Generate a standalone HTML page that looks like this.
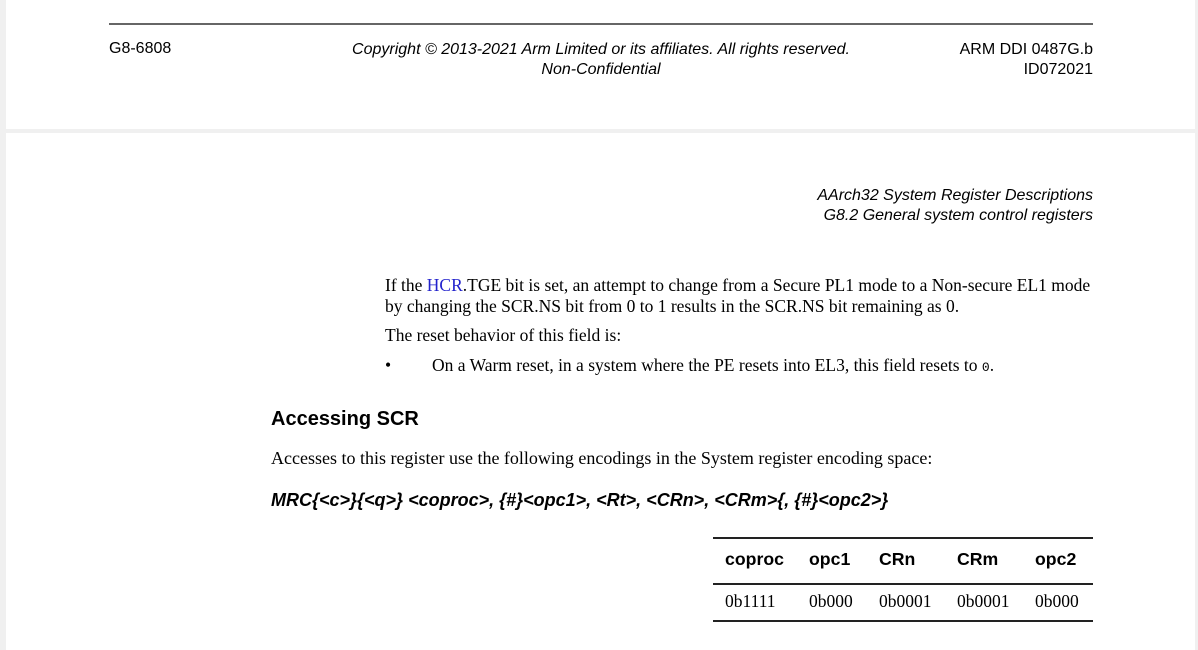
<!DOCTYPE html>
<html><head><style>
body{margin:0;width:1198px;height:650px;background:#f0f0f0;position:relative;overflow:hidden;font-family:"Liberation Sans",sans-serif;color:#000}
.pg{position:absolute;left:6px;width:1189px;background:#fff}
.a{position:absolute;white-space:nowrap}
.s{font-family:"Liberation Serif",serif;font-size:17.5px}
.h{font-size:16px}
.ln{position:absolute;height:1.5px;background:#222}
.b{font-size:17.7px;font-weight:bold}
</style></head><body>
<div class="pg" style="top:0;height:129px"></div>
<div class="pg" style="top:133px;height:517px"></div>
<div class="ln" style="left:109px;width:984px;top:23px;background:#666"></div>
<div class="a h" style="left:109px;top:40px">G8-6808</div>
<div class="a h" style="left:341px;top:40px;width:520px;text-align:center;font-style:italic;line-height:20px">Copyright © 2013-2021 Arm Limited or its affiliates. All rights reserved.<br>Non-Confidential</div>
<div class="a h" style="right:105px;top:40px;text-align:right;line-height:20px">ARM DDI 0487G.b<br>ID072021</div>
<div class="a h" style="right:105px;top:186px;text-align:right;font-style:italic;line-height:20px">AArch32 System Register Descriptions<br>G8.2 General system control registers</div>
<div class="a s" style="left:385px;top:275px;line-height:21px">If the <span style="color:#2222cc">HCR</span>.TGE bit is set, an attempt to change from a Secure PL1 mode to a Non-secure EL1 mode<br>by changing the SCR.NS bit from 0 to 1 results in the SCR.NS bit remaining as 0.</div>
<div class="a s" style="left:385px;top:325px">The reset behavior of this field is:</div>
<div class="a s" style="left:385px;top:355px">•</div>
<div class="a s" style="left:432px;top:355px">On a Warm reset, in a system where the PE resets into EL3, this field resets to <span style="font-family:'Liberation Mono',monospace;font-size:13px">0</span>.</div>
<div class="a" style="left:271px;top:408px;font-size:20px;font-weight:bold">Accessing SCR</div>
<div class="a s" style="left:271px;top:448px;font-size:18px">Accesses to this register use the following encodings in the System register encoding space:</div>
<div class="a" style="left:271px;top:490px;font-size:18px;font-weight:bold;font-style:italic">MRC{&lt;c&gt;}{&lt;q&gt;} &lt;coproc&gt;, {#}&lt;opc1&gt;, &lt;Rt&gt;, &lt;CRn&gt;, &lt;CRm&gt;{, {#}&lt;opc2&gt;}</div>
<div class="ln" style="left:713px;width:380px;top:537px"></div>
<div class="ln" style="left:713px;width:380px;top:583px"></div>
<div class="ln" style="left:713px;width:380px;top:620px"></div>
<div class="a b" style="left:725px;top:549px">coproc</div>
<div class="a b" style="left:809px;top:549px">opc1</div>
<div class="a b" style="left:879px;top:549px">CRn</div>
<div class="a b" style="left:957px;top:549px">CRm</div>
<div class="a b" style="left:1035px;top:549px">opc2</div>
<div class="a s" style="left:725px;top:591px">0b1111</div>
<div class="a s" style="left:809px;top:591px">0b000</div>
<div class="a s" style="left:879px;top:591px">0b0001</div>
<div class="a s" style="left:957px;top:591px">0b0001</div>
<div class="a s" style="left:1035px;top:591px">0b000</div>
</body></html>
